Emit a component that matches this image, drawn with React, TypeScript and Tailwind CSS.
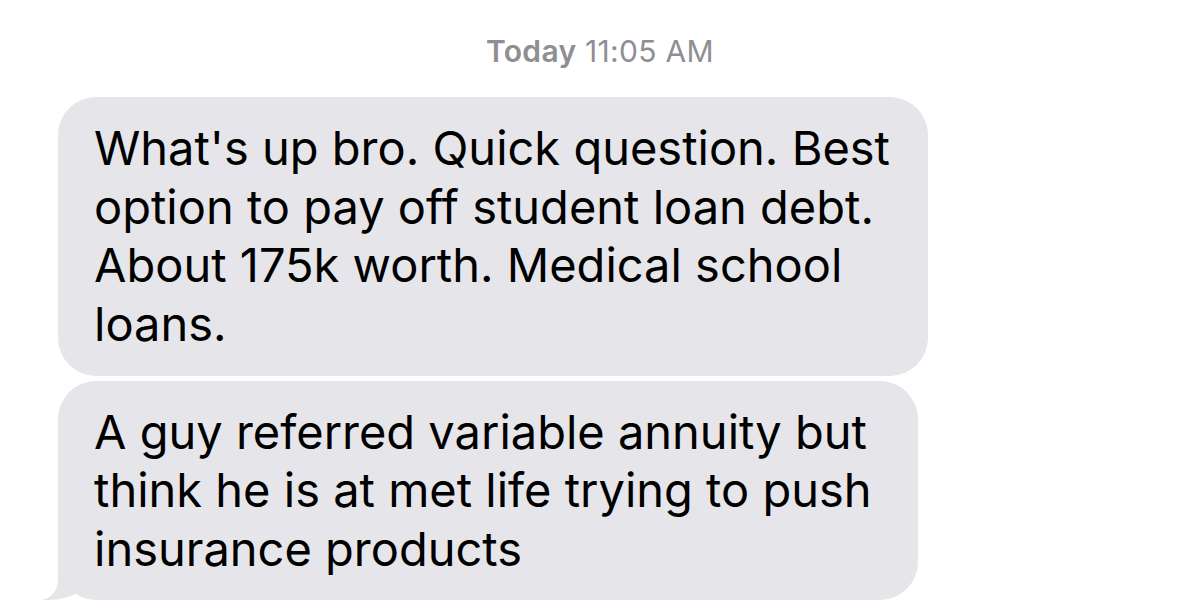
import React from "react";

const font = { fontFamily: "Inter, 'Liberation Sans', sans-serif" };

function Tail() {
  // little hook on the bottom-left of a received bubble
  return (
    <svg
      className="absolute -left-[17px] bottom-0"
      width="60"
      height="50"
      viewBox="0 0 60 50"
    >
      <path d="M17 0 L17 28 Q17 46 1 50 Q23 51 40 41 L40 0 Z" fill="#e5e5ea" />
    </svg>
  );
}

export default function App() {
  return (
    <div className="w-[1200px] h-[614px] bg-white overflow-hidden" style={font}>
      {/* timestamp */}
      <div className="pt-[33px] text-center text-[30px] leading-[36px] tracking-[0.3px] text-[#8e8e93]">
        <span className="font-semibold">Today</span> 11:05 AM
      </div>

      <div className="mt-[28px] pl-[58px] flex flex-col gap-[5px]">
        <div className="w-[870px] rounded-[38px] bg-[#e5e5ea] pl-[36px] py-[22px] text-[47px] leading-[58.7px] text-black">
          What's up bro. Quick question. Best
          <br />
          option to pay off student loan debt.
          <br />
          About 175k worth. Medical school
          <br />
          loans.
        </div>

        <div className="relative w-[860px] rounded-[38px] bg-[#e5e5ea] pl-[36px] py-[22px] text-[47px] leading-[58.5px] text-black">
          <Tail />
          <span className="relative">
            A guy referred variable annuity but
            <br />
            think he is at met life trying to push
            <br />
            insurance products
          </span>
        </div>
      </div>
    </div>
  );
}
